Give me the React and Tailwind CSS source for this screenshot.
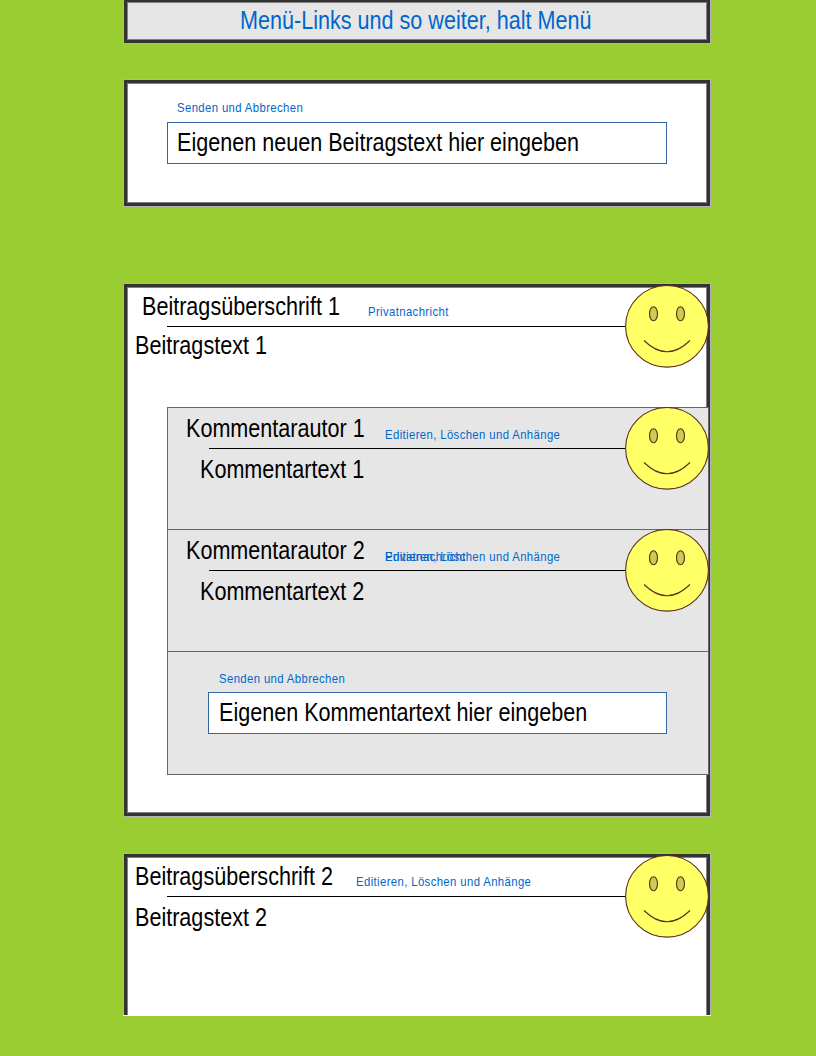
function Title({ children, className = "" }) {
  return (
    <span className={"block w-max origin-left scale-x-[0.83] whitespace-nowrap text-[26px] leading-[30px] " + className}>
      {children}
    </span>
  );
}

function Action({ children, className = "" }) {
  return (
    <span className={"block w-max origin-left scale-x-[0.84] whitespace-nowrap text-[13.5px] leading-4 tracking-[0.45px] text-[#0066cc] " + className}>
      {children}
    </span>
  );
}

function Frame({ children, className = "" }) {
  return (
    <div className={"w-[588px] border border-[#b3b3b3] " + className}>
      <div className="h-full border-3 border-[#333333]">
        <div className="h-full border border-[#808080]">{children}</div>
      </div>
    </div>
  );
}

function Smiley({ className = "" }) {
  return (
    <svg viewBox="0 0 84 83" className={"absolute h-[83px] w-[84px] " + className} fill="none" stroke="#5e3018" strokeWidth="1.1">
      <ellipse cx="42" cy="41.3" rx="41.4" ry="40.8" fill="#ffff66" />
      <ellipse cx="28.5" cy="28.8" rx="4" ry="7" fill="#cccc52" />
      <ellipse cx="55.5" cy="28.8" rx="4" ry="7" fill="#cccc52" />
      <path d="M19 55.5 Q42 78 65 55.5" />
    </svg>
  );
}

function Comment({ author, text, children }) {
  return (
    <article className="relative h-[122px] border-b border-[#666666]">
      <div className="flex h-[41px] items-start pt-[5px]">
        <div className="ml-[18px] w-[199px]">
          <Title>{author}</Title>
        </div>
        <div className="grid pt-[14px]">{children}</div>
      </div>
      <div className="-mt-px ml-[41px] h-px w-[418px] bg-black" />
      <Title className="ml-8 mt-[5px]">{text}</Title>
      <Smiley className="-top-px left-[457px]" />
    </article>
  );
}

export default function App() {
  return (
    <main className="h-[1056px] w-[816px] overflow-hidden bg-[#9acd32] pl-[123px] font-['Liberation_Sans',Arial,sans-serif] text-black">
      <Frame className="-mt-[2px] h-[46px] bg-[#e6e6e6]">
        <nav className="pl-[112px] pt-[2px]">
          <Title className="text-[#0066cc]">Menü-Links und so weiter, halt Menü</Title>
        </nav>
      </Frame>

      <Frame className="mt-[35px] h-32 bg-white">
        <div className="pl-[39px] pt-4">
          <Action className="ml-[10px]">Senden und Abbrechen</Action>
          <div className="mt-[6px] h-[42px] w-[500px] border border-[#3465a4] bg-white pl-[9px] pt-1">
            <Title>Eigenen neuen Beitragstext hier eingeben</Title>
          </div>
        </div>
      </Frame>

      <Frame className="relative mt-[76px] h-[534px] bg-white">
        <header className="flex h-[38px] items-start pt-[3px]">
          <div className="ml-[14px] w-[226px]">
            <Title>Beitragsüberschrift 1</Title>
          </div>
          <Action className="mt-[13px]">Privatnachricht</Action>
        </header>
        <div className="ml-[39px] h-px w-[459px] bg-black" />
        <Title className="ml-[7px] mt-[3px]">Beitragstext 1</Title>
        <Smiley className="left-[501px] top-px" />
        <section className="relative ml-[39px] mt-[47px] h-[368px] w-[542px] border border-[#666666] bg-[#e6e6e6]">
          <Comment author="Kommentarautor 1" text="Kommentartext 1">
            <Action>Editieren, Löschen und Anhänge</Action>
          </Comment>
          <Comment author="Kommentarautor 2" text="Kommentartext 2">
            <Action className="col-start-1 row-start-1">Editieren, Löschen und Anhänge</Action>
            <Action className="col-start-1 row-start-1">Privatnachricht</Action>
          </Comment>
          <div className="pl-10 pt-[19px]">
            <Action className="ml-[11px]">Senden und Abbrechen</Action>
            <div className="mt-[5px] h-[42px] w-[459px] border border-[#3465a4] bg-white pl-[10px] pt-1">
              <Title>Eigenen Kommentartext hier eingeben</Title>
            </div>
          </div>
        </section>
      </Frame>

      <div className="relative mt-9 w-[588px] bg-white pb-px">
        <div className="h-[162px] overflow-hidden">
          <Frame className="h-[180px] bg-white">
            <header className="flex h-[38px] items-start pt-[3px]">
              <div className="ml-[7px] w-[221px]">
                <Title>Beitragsüberschrift 2</Title>
              </div>
              <Action className="mt-[13px]">Editieren, Löschen und Anhänge</Action>
            </header>
            <div className="ml-[39px] h-px w-[459px] bg-black" />
            <Title className="ml-[7px] mt-[5px]">Beitragstext 2</Title>
          </Frame>
        </div>
        <Smiley className="left-[502px] top-[2px]" />
      </div>
    </main>
  );
}
